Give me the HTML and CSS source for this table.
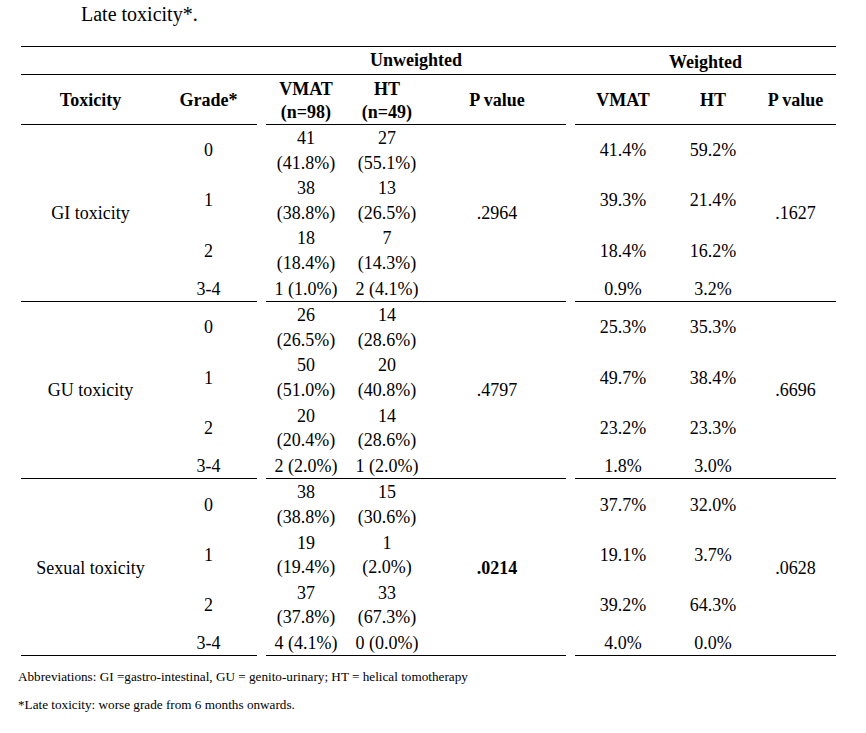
FILE: index.html
```html
<!DOCTYPE html>
<html lang="en">
<head>
<meta charset="utf-8">
<title>Late toxicity</title>
<link rel="stylesheet" href="styles.css">
</head>
<body>
<div class="caption">Late toxicity*.</div>
<table class="tox">
  <colgroup>
    <col class="c-tox"><col class="c-grade"><col class="c-gap">
    <col class="c-uv"><col class="c-uh"><col class="c-up"><col class="c-gap">
    <col class="c-wv"><col class="c-wh"><col class="c-wp">
  </colgroup>
  <thead>
    <tr class="h1">
      <th></th><th></th><th></th>
      <th colspan="3">Unweighted</th>
      <th></th>
      <th colspan="3" class="lower">Weighted</th>
    </tr>
    <tr class="h2">
      <th class="rule">Toxicity</th>
      <th class="rule">Grade*</th>
      <th class="gap"></th>
      <th class="rule">VMAT<br>(n=98)</th>
      <th class="rule">HT<br>(n=49)</th>
      <th class="rule">P value</th>
      <th class="gap"></th>
      <th class="rule">VMAT</th>
      <th class="rule">HT</th>
      <th class="rule">P value</th>
    </tr>
  </thead>
  <tbody>
    <tr>
      <td rowspan="4" class="rule">GI toxicity</td><td>0</td><td rowspan="4" class="gap"></td>
      <td>41<br>(41.8%)</td><td>27<br>(55.1%)</td>
      <td rowspan="4" class="rule">.2964</td><td rowspan="4" class="gap"></td>
      <td>41.4%</td><td>59.2%</td><td rowspan="4" class="rule">.1627</td>
    </tr>
    <tr><td>1</td><td>38<br>(38.8%)</td><td>13<br>(26.5%)</td><td>39.3%</td><td>21.4%</td></tr>
    <tr><td>2</td><td>18<br>(18.4%)</td><td>7<br>(14.3%)</td><td>18.4%</td><td>16.2%</td></tr>
    <tr class="last"><td>3-4</td><td>1 (1.0%)</td><td>2 (4.1%)</td><td>0.9%</td><td>3.2%</td></tr>

    <tr>
      <td rowspan="4" class="rule">GU toxicity</td><td>0</td><td rowspan="4" class="gap"></td>
      <td>26<br>(26.5%)</td><td>14<br>(28.6%)</td>
      <td rowspan="4" class="rule">.4797</td><td rowspan="4" class="gap"></td>
      <td>25.3%</td><td>35.3%</td><td rowspan="4" class="rule">.6696</td>
    </tr>
    <tr><td>1</td><td>50<br>(51.0%)</td><td>20<br>(40.8%)</td><td>49.7%</td><td>38.4%</td></tr>
    <tr><td>2</td><td>20<br>(20.4%)</td><td>14<br>(28.6%)</td><td>23.2%</td><td>23.3%</td></tr>
    <tr class="last"><td>3-4</td><td>2 (2.0%)</td><td>1 (2.0%)</td><td>1.8%</td><td>3.0%</td></tr>

    <tr>
      <td rowspan="4" class="rule">Sexual toxicity</td><td>0</td><td rowspan="4" class="gap"></td>
      <td>38<br>(38.8%)</td><td>15<br>(30.6%)</td>
      <td rowspan="4" class="rule"><strong>.0214</strong></td><td rowspan="4" class="gap"></td>
      <td>37.7%</td><td>32.0%</td><td rowspan="4" class="rule">.0628</td>
    </tr>
    <tr><td>1</td><td>19<br>(19.4%)</td><td>1<br>(2.0%)</td><td>19.1%</td><td>3.7%</td></tr>
    <tr><td>2</td><td>37<br>(37.8%)</td><td>33<br>(67.3%)</td><td>39.2%</td><td>64.3%</td></tr>
    <tr class="last"><td>3-4</td><td>4 (4.1%)</td><td>0 (0.0%)</td><td>4.0%</td><td>0.0%</td></tr>
  </tbody>
</table>
<p class="note note-first">Abbreviations: GI =gastro-intestinal, GU = genito-urinary; HT = helical tomotherapy</p>
<p class="note">*Late toxicity: worse grade from 6 months onwards.</p>
</body>
</html>
```
FILE: styles.css
```css
html, body {
  margin: 0;
  padding: 0;
  background: #ffffff;
  color: #000000;
  font-family: "Liberation Serif", "Times New Roman", serif;
}

.caption {
  font-family: "Liberation Serif", "Times New Roman", serif;
  font-size: 20px;
  line-height: 24px;
  padding: 2px 0 0 81px;
  margin-bottom: 20px;
}

.tox {
  margin-left: 21px;
  width: 815px;
  table-layout: fixed;
  border-collapse: collapse;
  font-family: "Liberation Serif", "Times New Roman", serif;
  font-size: 18px;
}

.c-tox { width: 139px; }
.c-grade { width: 97px; }
.c-gap { width: 9px; }
.c-uv { width: 80px; }
.c-uh { width: 82px; }
.c-up { width: 138px; }
.c-wv { width: 96px; }
.c-wh { width: 84px; }
.c-wp { width: 81px; }

.tox th,
.tox td {
  padding: 0;
  text-align: center;
  vertical-align: middle;
  white-space: nowrap;
  font-family: "Liberation Serif", "Times New Roman", serif;
}

.tox th {
  font-weight: bold;
  line-height: 21px;
}

.h1 th {
  padding: 3px 0 3px;
  border-top: 1px solid #000;
  border-bottom: 1px solid #000;
}

.h1 th.lower {
  padding: 5px 0 1px;
}

.h2 th {
  line-height: 22.5px;
  padding: 3px 0 1px;
}

.h2 th.rule {
  border-bottom: 1px solid #000;
}

.tox td {
  line-height: 24.6px;
  padding-top: 1px;
}

.tox td.rule,
.tox tr.last td {
  border-bottom: 1px solid #000;
}

.tox td.gap {
  border-bottom: none;
}

.tox strong {
  font-weight: bold;
}

.note {
  font-family: "Liberation Serif", "Times New Roman", serif;
  margin: 12px 0 0 18px;
  font-size: 13.2px;
  line-height: 16px;
}

.note-first {
  margin-top: 13px;
}
```
